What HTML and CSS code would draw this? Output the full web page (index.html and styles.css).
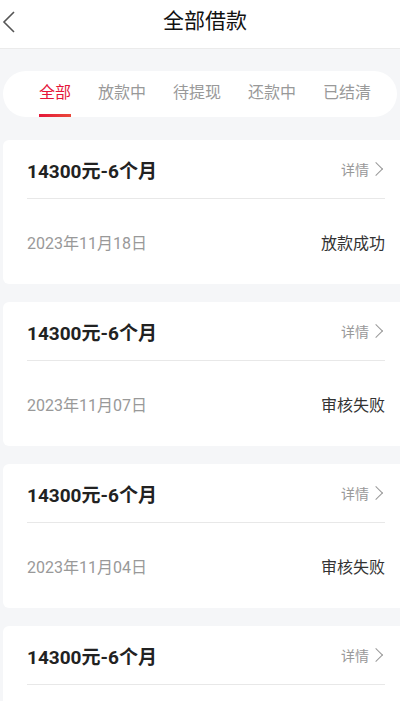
FILE: index.html
```html
<!DOCTYPE html>
<html lang="zh-CN">
  <head>
    <meta charset="utf-8" />
    <meta name="viewport" content="width=device-width, initial-scale=1" />
    <title>全部借款</title>
    <link rel="stylesheet" href="styles.css">
  </head>
  <body>
    <div class="header">
      <a class="back" href="#">
        <svg width="14" height="24" viewBox="0 0 14 24">
          <polyline points="12,2 2,12 12,22" fill="none" stroke="#555" stroke-width="1.6" />
        </svg>
      </a>
      <h1>全部借款</h1>
      <span></span>
    </div>

    <div class="page">
      <!-- tab bar -->
      <div class="tabs">
        <span class="tab active">全部</span>
        <span class="tab">放款中</span>
        <span class="tab">待提现</span>
        <span class="tab">还款中</span>
        <span class="tab">已结清</span>
      </div>

      <div class="card">
        <div class="card-top">
          <span class="amount">14300元-6个月</span>
          <a class="more" href="#">详情<i class="arrow"></i></a>
        </div>
        <div class="card-bottom">
          <span class="date">2023年11月18日</span>
          <span class="status">放款成功</span>
        </div>
      </div>

      <div class="card">
        <div class="card-top">
          <span class="amount">14300元-6个月</span>
          <a class="more" href="#">详情<i class="arrow"></i></a>
        </div>
        <div class="card-bottom">
          <span class="date">2023年11月07日</span>
          <span class="status">审核失败</span>
        </div>
      </div>

      <div class="card">
        <div class="card-top">
          <span class="amount">14300元-6个月</span>
          <a class="more" href="#">详情<i class="arrow"></i></a>
        </div>
        <div class="card-bottom">
          <span class="date">2023年11月04日</span>
          <span class="status">审核失败</span>
        </div>
      </div>

      <!-- last card, only its top row is on screen -->
      <div class="card last">
        <div class="card-top">
          <span class="amount">14300元-6个月</span>
          <a class="more" href="#">详情<i class="arrow"></i></a>
        </div>
      </div>
    </div>
  </body>
</html>
```

FILE: styles.css
```css
html, body {
  margin: 0;
  padding: 0;
}

body {
  font-family: Roboto, "Noto Sans CJK SC", sans-serif;
  background-color: #f5f6f8;
  color: #222;
  height: 701px;
  overflow: hidden;
}

.header {
  display: grid;
  grid-template-columns: 1fr auto 1fr;
  align-items: center;
  height: 48px;
  background-color: #fff;
  border-bottom: 1px solid #ebebeb;
}

.back {
  display: flex;
  margin-left: 2px;
  margin-top: -4px;
}

.header h1 {
  margin: 0 0 6px 10px;
  font-size: 21px;
  font-weight: normal;
  color: #111;
  line-height: 30px;
}

.page {
  padding: 22px 0 0 3px;
}

.tabs {
  display: flex;
  gap: 27px;
  height: 46px;
  padding-left: 36px;
  margin-right: 3px;
  background-color: #fff;
  border-radius: 23px;
}

.tab {
  box-sizing: border-box;
  height: 46px;
  line-height: 44px;
  font-size: 16px;
  color: #999;
  border-bottom: 3px solid transparent;
}

.tab.active {
  color: #e5163a;
  border-bottom: 3px solid;
  border-image: linear-gradient(to right, #e5163a, #ea4a3a) 1;
}

.card {
  margin-top: 23px;
  background-color: #fff;
  border-radius: 6px 0 0 6px;
  padding: 0 15px 0 24px;
}

.card + .card {
  margin-top: 18px;
}

.card.last {
  padding-bottom: 60px;
}

.card-top {
  display: flex;
  justify-content: space-between;
  align-items: center;
  height: 58px;
  border-bottom: 1px solid #e8e8e8;
}

.amount {
  font-size: 19px;
  font-weight: bold;
  color: #222;
}

.more {
  display: flex;
  align-items: center;
  font-size: 14px;
  color: #999;
  text-decoration: none;
  margin-right: 4px;
}

.arrow {
  display: inline-block;
  width: 9px;
  height: 9px;
  border-top: 1.5px solid #999;
  border-right: 1.5px solid #999;
  transform: rotate(45deg);
  margin-left: 2px;
}

.card-bottom {
  display: flex;
  justify-content: space-between;
  align-items: center;
  height: 85px;
}

.date {
  font-size: 16px;
  color: #999;
}

.status {
  font-size: 16px;
  color: #333;
}
```
